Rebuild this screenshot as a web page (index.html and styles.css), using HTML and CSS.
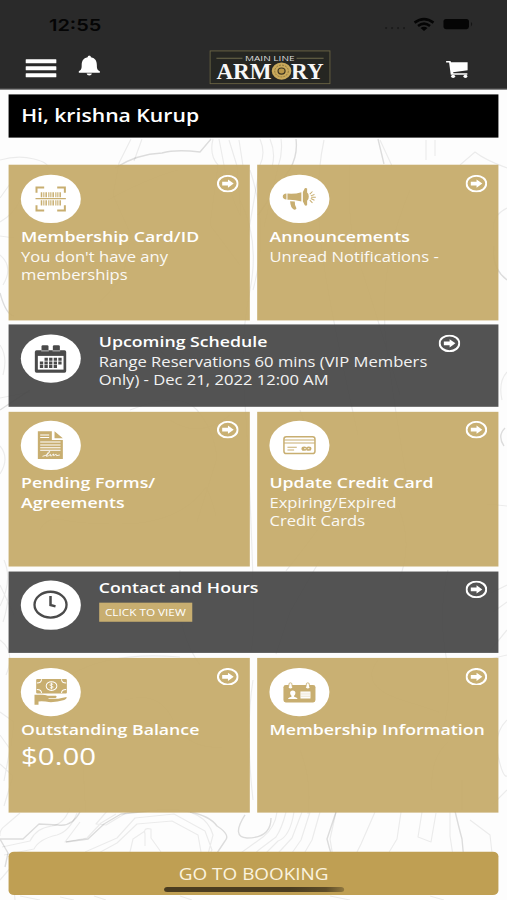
FILE: index.html
```html
<!DOCTYPE html>
<html lang="en">
<head>
<meta charset="utf-8">
<title>Main Line Armory</title>
<link rel="stylesheet" href="styles.css">
</head>
<body>
<svg width="0" height="0" class="defs">
  <symbol id="arrow" viewBox="0 0 65 53" preserveAspectRatio="none">
    <ellipse cx="32.5" cy="26.5" rx="29" ry="23.500" fill="none" stroke="#fff" stroke-width="6"/>
    <path d="M16 21h17v-7l17 12.500-17 12.500v-7H16z" fill="#fff"/>
  </symbol>
</svg>
<div class="app">
  <svg class="contours" viewBox="0 0 507 900" preserveAspectRatio="none" fill="none" stroke="#000" stroke-linejoin="round">
    <g class="light">
      <path d="M131 139l-12 24-6 32 18 40-8 42-24 26M142 139l-8 22M213 139q-4 16 5 26l-8 60 30 40M219 139l5 26q6 30 16 50M229 140l8 26 4 50M239 140l4 26M260 139q6 14 0 26l-12 70M270 139q6 14 2 28M281 139q2 14-3 28l-14 60M380 140l12 26M426 140v20M435 140v16"/>
      <path d="M0 160q18-5 34-1t14 10M507 168q-22-8-32-16l-15 13M0 198l10-14M0 222q14-8 20-22M0 236l14 2M507 208q-16 8-13 22M0 255q14 12 3 30M0 345q8 12 3 30M507 372q-9 10-5 28M0 398l30-6M0 446q10 12 0 28M507 506l-20-2M4 560q9 20-4 46M0 585l14 30M0 640q16 12 6 35M10 578q-2 30-7 44M507 585l-16 8M507 602l-14 10M507 630l-18 22M507 655l-17 4M507 720q-14 14-9 36t9 20M0 712l14 10-3 24M0 735l10 14-6 32M0 764l13 12-9 30M507 790l-14 14"/>
      <path d="M20 813l-14 12q-7 5-6 11M70 808q-6 16-18 18-16 2-22 15l-28 6M77 813q-7 18-20 22-18 4-23 14L4 855M80 822l-15 20 22-4 14-15 15-9M108 810l-12 14 10 1 20-12 24-2M95 855l22-12 20-19 35-3 26 14 3 17-5 12M85 852l32-14 18-20 39-4 31 17 7 19-8 14M130 852l3-13 12-8M145 846v-12q-2-7 6-5v9l10 14M148 811q56-8 65 24l-6 23M277 812q-2 16-14 25l-25 18M286 812q-4 16-10 25l-16 12-14 12M294 812q-4 25-16 29l-20 20M302 812l-10 26-22 24M310 812l-9 28-16 23M320 812l-8 28-14 24M336 812l-6 27 4 24M375 812l-14 32-8 16M401 812l-4 27-12 20M422 812l-4 25 13 5 5-29M450 812v24l4 26M470 820l20 15 3 27M0 880l12-14 3 34M20 896l20 4M60 897l14 3M94 896l12 4M180 896l12 4M330 896l20 4M430 896l14 4"/>
      <path d="M130 410q50-20 67 0t20 48l-20 64M40 530q6-14 24-10t56 4q60 0 86-37 6 12 10 29M170 420q30 20 60-5M350 480q-20 36-64 91M320 560l-30 52-14 42M410 190q-34 80-23 160t20 130M300 410q12 30 2 60M324 140q-9 42-4 95t38 200M350 165q-4 60 10 100t40 130M395 500q20 40 4 80M448 570q-10 42-2 86t-6 82M125 700q34-10 48 20t50 27M90 720q-10 38-4 92M300 750q12 30 8 64M378 660q-20 26 24 40t36 12M432 790q-2-32 16-48M462 780v30M70 675q40-24 110-18M180 570q-6 60 20 95M240 200q20 40 10 90t-6 100 8 160-3 100M250 170q20 60 3 120M253 680q-8 50 0 120M108 200q40-22 70-30M200 390q-26-24-40-40"/>
    </g>
    <g class="dark">
      <path d="M115 168q22-14 47-15 14-4 38-1l11-13M296 139q2 16-6 30l-32 46M378 139l6 25M0 293q6 22 14 23M0 410l30-20M507 280q-16-12-13-34M505 428q-8 8-1 18"/>
      <path d="M80 812q-8 15-22 13l-19-1-16 15-23 0 8 14-3 14M66 842l22-3 16-15 17-10 29-3M190 812q20 4 27 14 14 9 8 15l-10 15M245 815q-14 22 2 23 24 0 24-20M336 812l-9 27q4 16 7 22M455 811q4 17 7 28l2 22"/>
    </g>
  </svg>

  <header class="header">
    <div class="status">
      <span class="clock">12:55</span>
      <svg class="status-icons" viewBox="0 0 92 20" preserveAspectRatio="none">
        <g fill="#1b1b1b"><circle cx="4" cy="14" r="1.100"/><circle cx="10" cy="14" r="1.100"/><circle cx="16" cy="14" r="1.100"/><circle cx="22" cy="14" r="1.100"/></g>
        <g fill="none" stroke="#050505" stroke-width="2.600"><path d="M32.500 8.500q9.500-7 19 0"/><path d="M36 11.800q6-4.600 12 0"/></g>
        <path d="M38.500 13.800q3.500-2.500 7 0l-3.500 3z" fill="#050505"/>
        <rect x="61.500" y="5" width="25.500" height="10" rx="2.500" fill="#050505"/><path d="M89 8q2.500 2 0 4.500z" fill="#151515"/>
      </svg>
    </div>
    <nav class="nav">
      <div class="menu"><i></i><i></i><i></i></div>
      <svg class="bell" viewBox="0 0 66 62" preserveAspectRatio="none" fill="#fff"><path d="M33 1q5 0 5 5c14 3 18 12 18 24 0 10 1 14 9 18v5H1v-5c8-4 9-8 9-18C10 18 14 9 28 6q0-5 5-5zM25 55h16q-1 6-8 6t-8-6z"/></svg>
      <svg class="logo" viewBox="0 0 121 34" preserveAspectRatio="none">
        <rect x=".6" y=".6" width="119.800" height="32.800" fill="#252622" stroke="#6b6544" stroke-width="1.100"/>
        <path d="M7 8h26M87 8h27" stroke="#77704f" stroke-width=".9"/>
        <text x="35.500" y="10.400" textLength="49.500" lengthAdjust="spacingAndGlyphs" class="logo-small">MAIN LINE</text>
        <text x="7" y="28.300" textLength="55" lengthAdjust="spacingAndGlyphs" class="logo-big">ARM</text>
        <text x="81.500" y="28.300" textLength="32.500" lengthAdjust="spacingAndGlyphs" class="logo-big">RY</text>
        <ellipse cx="72" cy="20.700" rx="9.800" ry="8.600" fill="#c9a95b"/>
        <ellipse cx="72" cy="20.700" rx="6.800" ry="5.900" fill="none" stroke="#8b7338" stroke-width=".9" stroke-dasharray="2 1"/>
        <ellipse cx="72" cy="20.700" rx="3.500" ry="3" fill="#b99748" stroke="#3c3420" stroke-width="1.200"/>
      </svg>
      <svg class="cart" viewBox="0 0 68 54" preserveAspectRatio="none" fill="#fff"><path d="M1 2h13l2 4h50v24L22 36l1 3h42v4H15L10 7H1z"/><ellipse cx="22" cy="48" rx="6" ry="5"/><ellipse cx="59" cy="48" rx="6" ry="5"/></svg>
    </nav>
  </header>

  <main class="content">
    <h1 class="greeting">Hi, krishna Kurup</h1>

    <section class="tiles">
      <article class="tile">
        <svg class="badge" viewBox="0 0 178 145" preserveAspectRatio="none">
          <path d="M47 54V38h23M109 38h23v16M132 91v16h-23M70 107H47V91" fill="none" stroke="#c8ae70" stroke-width="6"/>
          <path d="M44 71.500h91" stroke="#c8ae70" stroke-width="4"/>
          <path d="M62 52v15M62 76v16M76 52v15M76 76v16M97 52v15M97 76v16M118 52v15M118 76v16" stroke="#c8ae70" stroke-width="4.500"/>
          <path d="M69 52v15M69 76v16M84 52v15M84 76v16M90 52v15M90 76v16M105 52v15M105 76v16M111 52v15M111 76v16" stroke="#c8ae70" stroke-width="3.400"/>
        </svg>
        <svg class="go"><use href="#arrow"/></svg>
        <h2>Membership Card/ID</h2>
        <p>You don't have any<br>memberships</p>
      </article>
      <article class="tile">
        <svg class="badge" viewBox="0 0 178 145" preserveAspectRatio="none" fill="#c8ae70">
          <path d="M51 56v18q-11-1-11-9t11-9zM54 56q22 2 42-4v28q-20-6-42-5z"/>
          <path d="M100 52l6-12q4-2 7 1v12q5 3 5 12t-5 13v12q-3 4-7 1l-6-12z"/>
          <path d="M98 46v40" stroke="#fff" stroke-width="2"/>
          <path d="M62 79l14 1q-1 8 5 20 0 5-8 4-10-6-11-25z"/>
          <path d="M121 58l8-8M124 63l11-4M125 67h14M124 71l11 5M121 76l8 8" stroke="#c8ae70" stroke-width="3"/>
        </svg>
        <svg class="go"><use href="#arrow"/></svg>
        <h2>Announcements</h2>
        <p>Unread Notifications -</p>
      </article>

      <article class="tile wide">
        <svg class="badge" viewBox="0 0 178 145" preserveAspectRatio="none" fill="#4a4a4a">
          <path d="M47 47h84q5 0 5 5v57q0 5-5 5H47q-5 0-5-5V52q0-5 5-5z"/>
          <rect x="62" y="32" width="21" height="20" rx="4"/><rect x="96" y="32" width="21" height="20" rx="4"/>
          <path d="M61 49h23M95 49h23" stroke="#fff" stroke-width="2"/>
          <rect x="51" y="64" width="77" height="41" fill="#fff"/>
          <path d="M71 74h54M57 85h68M57 96h54" stroke="#4a4a4a" stroke-width="9" stroke-dasharray="10 3.800"/>
        </svg>
        <div class="body">
          <h2>Upcoming Schedule</h2>
          <p>Range Reservations 60 mins (VIP Members<br>Only) - Dec 21, 2022 12:00 AM</p>
        </div>
        <svg class="go inset"><use href="#arrow"/></svg>
      </article>

      <article class="tile">
        <svg class="badge" viewBox="0 0 178 145" preserveAspectRatio="none">
          <path d="M51 31h42v26h33v57H51zM101 31l25 21h-25z" fill="#c8ae70"/>
          <path d="M58 42h27M58 50h27M58 63h61M58 72h61M58 80h61M58 88h61" stroke="#fff" stroke-width="3"/>
          <path d="M65 106q15-2 21-12 2-4-2-2-8 8-7 14 7-1 12-6-2 6 2 5l7-6 0 5 8-4 1 4 10-2" fill="none" stroke="#fff" stroke-width="2.600"/>
        </svg>
        <svg class="go"><use href="#arrow"/></svg>
        <h2>Pending Forms/<br>Agreements</h2>
      </article>
      <article class="tile">
        <svg class="badge" viewBox="0 0 178 145" preserveAspectRatio="none" fill="none" stroke="#c8ae70">
          <rect x="43.500" y="47.500" width="93" height="50" rx="7" stroke-width="4.500"/>
          <path d="M44 57.500h92M44 66.500h92" stroke-width="3"/>
          <path d="M54 79h28M54 87h20" stroke-width="3"/>
          <g fill="#c8ae70" stroke="none"><ellipse cx="104" cy="83" rx="8" ry="6.500"/><ellipse cx="118" cy="83" rx="8" ry="6.500"/></g>
          <path d="M104 83h5M115 83h5" stroke="#fff" stroke-width="2.500"/>
        </svg>
        <svg class="go"><use href="#arrow"/></svg>
        <h2>Update Credit Card</h2>
        <p>Expiring/Expired<br>Credit Cards</p>
      </article>

      <article class="tile wide">
        <svg class="badge" viewBox="0 0 178 145" preserveAspectRatio="none" fill="none" stroke="#4a4a4a">
          <ellipse cx="89" cy="72" rx="48" ry="38.500" stroke-width="7"/>
          <path d="M89 46v27l15 4" stroke-width="7.500"/>
        </svg>
        <div class="body">
          <h2>Contact and Hours</h2>
          <span class="chip">CLICK TO VIEW</span>
        </div>
        <svg class="go"><use href="#arrow"/></svg>
      </article>

      <article class="tile">
        <svg class="badge" viewBox="0 0 178 145" preserveAspectRatio="none">
          <rect x="46" y="33" width="92" height="43" rx="3" fill="#c8ae70"/>
          <g fill="none" stroke="#fff" stroke-width="3"><path d="M48 45q14 0 14-11M122 34q0 11 14 11M48 64q14 0 14 11M122 75q0-11 14-11"/><ellipse cx="92" cy="54" rx="16" ry="13"/></g>
          <path d="M97 49q-9-4-10 1 0 3 5 4t5 4q-2 4-10 1M92 44v20" fill="none" stroke="#fff" stroke-width="2.500"/>
          <path d="M41 80h22q10 0 18 3h24q5 3-1 7H83v2h29l25-5q2 5-7 9-22 7-46 6-12-3-31-2v10H41z" fill="#c8ae70"/>
        </svg>
        <svg class="go"><use href="#arrow"/></svg>
        <h2>Outstanding Balance</h2>
        <p class="amount">$0.00</p>
      </article>
      <article class="tile">
        <svg class="badge" viewBox="0 0 178 145" preserveAspectRatio="none">
          <rect x="42" y="51" width="96" height="52" rx="7" fill="#c8ae70"/>
          <path d="M57 60l2-14q4-3 8 0l2 14zM109 60l2-14q4-3 8 0l2 14z" fill="#fff" stroke="#c8ae70" stroke-width="2.500"/>
          <path d="M59 57q4 5 8 0M111 57q4 5 8 0" stroke="#fff" stroke-width="4" fill="none"/>
          <path d="M70 67q8 0 8 8 0 5-4 8v3q10 2 10 7H56q0-5 10-7v-3q-4-3-4-8 0-8 8-8zM93 70h30v21H93z" fill="#fff"/>
          <path d="M93 75.500h30M93 80.500h30M93 85.500h30" stroke="#e3d5b3" stroke-width="1.500"/>
        </svg>
        <svg class="go"><use href="#arrow"/></svg>
        <h2>Membership Information</h2>
      </article>
    </section>

    <button class="booking">GO TO BOOKING<span class="home"></span></button>
  </main>
</div>
</body>
</html>
```
FILE: styles.css
```css
* { box-sizing: border-box; }

html, body {
  margin: 0;
  background: #fff;
  overflow: hidden;
}

body { width: 507px; height: 900px; }

.defs { position: absolute; }

/* A 414x896 phone canvas stretched to the window. */
.app {
  position: relative;
  width: 414px;
  height: 896px;
  transform: scale(1.22464, 1.00446);
  transform-origin: 0 0;
  font-family: "Open Sans", "Noto Sans", sans-serif;
  color: #fff;
  background: #fdfdfd;
  overflow: hidden;
}

.contours {
  position: absolute;
  inset: 0;
  width: 100%;
  height: 100%;
}
.contours .light { stroke-opacity: .07; stroke-width: 1.2; }
.contours .dark { stroke-opacity: .13; stroke-width: 1.4; }

.header {
  position: relative;
  height: 88.6px;
  background: #2a2a2a;
  border-bottom: 1px solid #555;
}

.status {
  height: 44px;
  padding: 9.5px 27px 0 40px;
  display: flex;
  justify-content: space-between;
}
.clock {
  font: 600 16.3px/30px Inter, sans-serif;
  color: #050505;
}
.status-icons { width: 75px; height: 20px; margin-top: 4.5px; }

.nav {
  height: 44px;
  padding-left: 21.2px;
  display: flex;
  align-items: flex-start;
}
.menu {
  width: 25px;
  margin: 14.8px 17.8px 0 0;
  display: grid;
  gap: 2.8px;
}
.menu i { height: 4.3px; background: #fff; border-radius: .5px; }
.bell { width: 17.8px; height: 20.5px; margin: 11.2px 88.8px 0 0; }
.logo { width: 99px; height: 34px; margin: 5.8px 94.2px 0 0; }
.cart { width: 18.5px; height: 18px; margin-top: 16px; }

.logo-small { font: 7.2px "Open Sans", sans-serif; fill: #ddd; }
.logo-big { font: bold 23px "Liberation Serif", serif; fill: #f7f7f7; }

.content {
  position: relative;
  padding: 5px 7px 0 7.3px;
}

.greeting {
  margin: 0;
  height: 43.5px;
  padding-left: 10px;
  background: #000;
  font-size: 17.3px;
  line-height: 42px;
  font-weight: 600;
}

.tiles {
  margin-top: 27.2px;
  display: grid;
  grid-template-columns: 1fr 1fr;
  grid-template-rows: 154.6px 81.8px 154.6px 81.8px 154.6px;
  gap: 4.45px 6px;
}

.tile {
  display: grid;
  grid-template-columns: 1fr auto;
  grid-template-rows: 48.3px auto auto 1fr;
  padding: 9.8px 9.3px 0 9.9px;
  background: rgba(196, 169, 103, .92);
}
.tile h2, .tile p { grid-column: 1 / -1; }
.wide {
  grid-column: 1 / -1;
  grid-template-columns: auto 1fr auto;
  grid-template-rows: auto;
  background: rgba(70, 70, 70, .93);
}

.badge {
  width: 48.5px;
  height: 48.3px;
  border-radius: 50%;
  background: #fff;
}
.go { width: 18px; height: 17.6px; }
.go.inset { margin-right: 22px; }

.body { margin: -3.4px 0 0 15px; white-space: nowrap; }

h2 {
  margin: 3.7px 0 0;
  font-size: 14.46px;
  line-height: 20px;
  font-weight: 600;
  white-space: nowrap;
}
.body h2 { margin: 0; }

p {
  margin: .8px 0 0;
  font-size: 13.55px;
  line-height: 18.3px;
  white-space: nowrap;
  opacity: .93;
}
.amount { font-size: 24px; line-height: 32px; opacity: 1; }

.chip {
  display: block;
  width: 76px;
  height: 19px;
  margin-top: 4.8px;
  background: #c8ae70;
  font-size: 9.6px;
  line-height: 19px;
  text-align: center;
}

.booking {
  position: relative;
  display: block;
  width: 100%;
  height: 43.5px;
  margin-top: 38.2px;
  padding: 0;
  border: 0;
  border-radius: 4.5px;
  background: #bf9f53;
  color: #fbf3df;
  font: 15.45px/44px "Open Sans", sans-serif;
}
.home {
  position: absolute;
  left: 126.5px;
  bottom: 3px;
  width: 147px;
  height: 4.8px;
  border-radius: 3px;
  background: linear-gradient(90deg, #4a3c20 70%, #5d4c28 90%, #8f773f);
}
```
